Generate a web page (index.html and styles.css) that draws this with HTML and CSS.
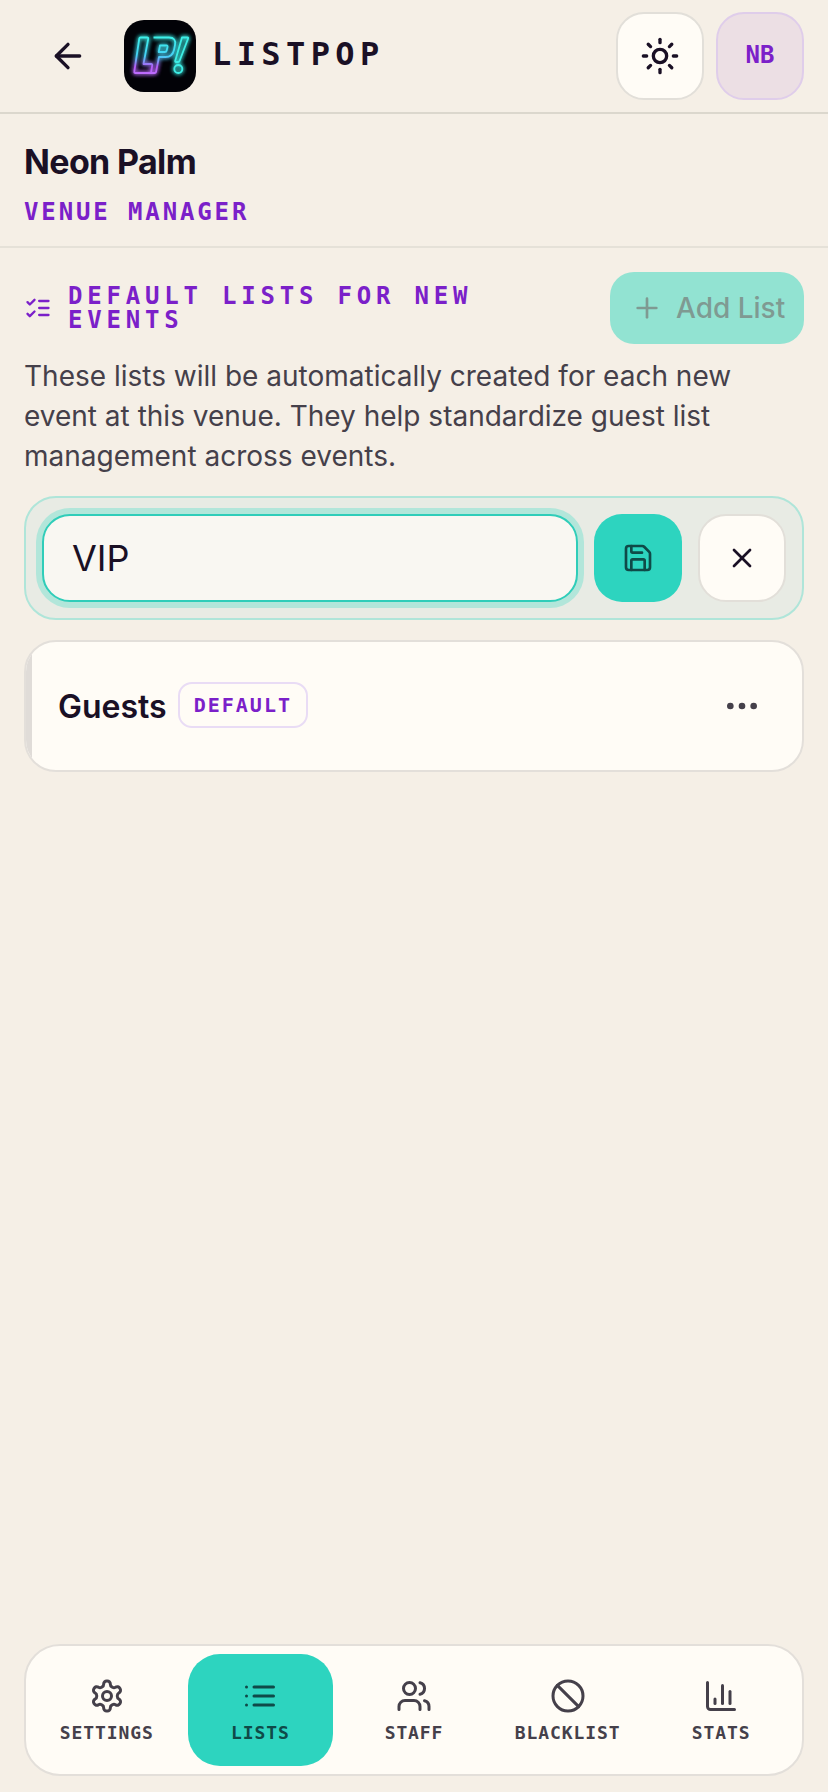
FILE: index.html
```html
<!DOCTYPE html>
<html lang="en">
<head>
    <meta charset="UTF-8">
    <meta name="viewport" content="width=device-width, initial-scale=1.0">
    <title>Default Lists - Neon Palm</title>
    <link rel="stylesheet" href="styles.css">
</head>
<body>

<header class="topbar">
  <button class="back-btn" aria-label="Back">
    <svg class="icon icon-40" viewBox="0 0 24 24"><path d="m12 19-7-7 7-7"/><path d="M19 12H5"/></svg>
  </button>
  <div class="brand">
    <svg class="logo" viewBox="0 0 72 72" role="img" aria-label="ListPop logo">
      <defs>
        <linearGradient id="neon" gradientUnits="userSpaceOnUse" x1="0" y1="17" x2="0" y2="55">
          <stop offset="0" stop-color="#3df2ea"/>
          <stop offset="0.5" stop-color="#45d0f5"/>
          <stop offset="0.78" stop-color="#b45cf8"/>
          <stop offset="1" stop-color="#c070ff"/>
        </linearGradient>
        <filter id="glow" x="-30%" y="-30%" width="160%" height="160%">
          <feGaussianBlur stdDeviation="2.200" result="blur"/>
          <feMerge>
            <feMergeNode in="blur"/>
            <feMergeNode in="blur"/>
            <feMergeNode in="SourceGraphic"/>
          </feMerge>
        </filter>
      </defs>
      <rect width="72" height="72" rx="20" fill="#020207"/>
      <g class="neon" filter="url(#glow)">
        <path d="M16.500 17.500h6.500q1.500 0 1.200 1.500l-4.700 25h7.500q1.500 0 1.200 1.500l-1 6q-.3 1.500-1.800 1.500H11.500q-1.500 0-1.200-1.500l5-33q.2-1 1.200-1z"/>
        <path d="M29.500 17.500h15.500c5 0 7 3 6 7.500l-1 5c-1 4.500-4 7-8.500 7h-6.500l-3 15q-.2 1-1.500 1h-5"/>
        <path d="M36 25.500h6.500q1.300 0 1 1.500l-.8 3.500q-.3 1.500-2 1.500h-6z"/>
        <path d="M58 17.500h5.500q1 0 .6 1l-8.600 22.500q-.4 1-1.500 1h-2q-1 0-.8-1z" stroke="#3deee6"/>
        <circle cx="54.300" cy="49" r="4" stroke="#3deee6"/>
      </g>
    </svg>
    <span class="brand-name">LISTPOP</span>
  </div>
  <div class="topbar-actions">
    <button class="square-btn" aria-label="Toggle theme">
      <svg class="icon icon-40" viewBox="0 0 24 24">
        <circle cx="12" cy="12" r="4"/>
        <path d="M12 2v2"/><path d="M12 20v2"/><path d="m4.930 4.930 1.410 1.410"/><path d="m17.660 17.660 1.410 1.410"/>
        <path d="M2 12h2"/><path d="M20 12h2"/><path d="m6.340 17.660-1.410 1.410"/><path d="m19.070 4.930-1.410 1.410"/>
      </svg>
    </button>
    <button class="square-btn avatar">NB</button>
  </div>
</header>

<section class="venue">
  <h1>Neon Palm</h1>
  <div class="venue-role">VENUE MANAGER</div>
</section>

<main class="content">
  <div class="section-head">
    <svg class="icon section-icon" viewBox="0 0 24 24">
      <path d="m3 17 2 2 4-4"/><path d="m3 7 2 2 4-4"/><path d="M13 6h8"/><path d="M13 12h8"/><path d="M13 18h8"/>
    </svg>
    <h2>DEFAULT LISTS FOR NEW EVENTS</h2>
    <button class="add-btn">
      <svg class="icon icon-32" viewBox="0 0 24 24"><path d="M5 12h14"/><path d="M12 5v14"/></svg>
      Add List
    </button>
  </div>
  <p class="section-text">These lists will be automatically created for each new event at this venue. They help standardize guest list management across events.</p>

  <div class="edit-row">
    <input class="edit-input" type="text" value="VIP">
    <button class="square-btn save-btn" aria-label="Save">
      <svg class="icon icon-32" viewBox="0 0 24 24">
        <path d="M15.200 3a2 2 0 0 1 1.400.6l3.800 3.800a2 2 0 0 1 .6 1.400V19a2 2 0 0 1-2 2H5a2 2 0 0 1-2-2V5a2 2 0 0 1 2-2z"/>
        <path d="M17 21v-7a1 1 0 0 0-1-1H8a1 1 0 0 0-1 1v7"/>
        <path d="M7 3v4a1 1 0 0 0 1 1h7"/>
      </svg>
    </button>
    <button class="square-btn" aria-label="Cancel">
      <svg class="icon icon-32" viewBox="0 0 24 24"><path d="M18 6 6 18"/><path d="m6 6 12 12"/></svg>
    </button>
  </div>

  <div class="list-card">
    <span class="list-name">Guests</span>
    <span class="badge">DEFAULT</span>
    <button class="menu-btn" aria-label="More">
      <svg class="icon icon-40" viewBox="0 0 24 24">
        <circle cx="12" cy="12" r="1"/><circle cx="19" cy="12" r="1"/><circle cx="5" cy="12" r="1"/>
      </svg>
    </button>
  </div>
</main>

<footer class="bottom">
  <nav class="tabs">
    <a class="tab">
      <svg class="icon icon-36" viewBox="0 0 24 24">
        <path d="M12.220 2h-.44a2 2 0 0 0-2 2v.18a2 2 0 0 1-1 1.730l-.43.25a2 2 0 0 1-2 0l-.15-.08a2 2 0 0 0-2.730.73l-.22.38a2 2 0 0 0 .73 2.730l.15.1a2 2 0 0 1 1 1.720v.51a2 2 0 0 1-1 1.740l-.15.09a2 2 0 0 0-.73 2.730l.22.38a2 2 0 0 0 2.730.73l.15-.08a2 2 0 0 1 2 0l.43.25a2 2 0 0 1 1 1.730V20a2 2 0 0 0 2 2h.44a2 2 0 0 0 2-2v-.18a2 2 0 0 1 1-1.730l.43-.25a2 2 0 0 1 2 0l.15.08a2 2 0 0 0 2.730-.73l.22-.39a2 2 0 0 0-.73-2.730l-.15-.08a2 2 0 0 1-1-1.740v-.5a2 2 0 0 1 1-1.740l.15-.09a2 2 0 0 0 .73-2.730l-.22-.38a2 2 0 0 0-2.730-.73l-.15.08a2 2 0 0 1-2 0l-.43-.25a2 2 0 0 1-1-1.730V4a2 2 0 0 0-2-2z"/>
        <circle cx="12" cy="12" r="3"/>
      </svg>
      SETTINGS
    </a>
    <a class="tab active">
      <svg class="icon icon-36" viewBox="0 0 24 24">
        <path d="M3 12h.01"/><path d="M3 18h.01"/><path d="M3 6h.01"/><path d="M8 12h13"/><path d="M8 18h13"/><path d="M8 6h13"/>
      </svg>
      LISTS
    </a>
    <a class="tab">
      <svg class="icon icon-36" viewBox="0 0 24 24">
        <path d="M16 21v-2a4 4 0 0 0-4-4H6a4 4 0 0 0-4 4v2"/><circle cx="9" cy="7" r="4"/>
        <path d="M22 21v-2a4 4 0 0 0-3-3.870"/><path d="M16 3.130a4 4 0 0 1 0 7.750"/>
      </svg>
      STAFF
    </a>
    <a class="tab">
      <svg class="icon icon-36" viewBox="0 0 24 24"><circle cx="12" cy="12" r="10"/><path d="m4.900 4.900 14.200 14.200"/></svg>
      BLACKLIST
    </a>
    <a class="tab">
      <svg class="icon icon-36" viewBox="0 0 24 24">
        <path d="M3 3v16a2 2 0 0 0 2 2h16"/><path d="M18 17V9"/><path d="M13 17V5"/><path d="M8 17v-3"/>
      </svg>
      STATS
    </a>
  </nav>
</footer>

</body>
</html>
```

FILE: styles.css
```css
* {box-sizing: border-box;}

body {
  margin: 0;
  min-height: 100vh;
  display: flex;
  flex-direction: column;
  background-color: #f5efe6;
  color: #1a1025;
  font-family: Inter, "Noto Sans", sans-serif;
}

button {
  font: inherit;
  color: inherit;
  background: none;
  border: 0;
  padding: 0;
}

.icon {
  display: block;
  flex: none;
  fill: none;
  stroke: currentColor;
  stroke-width: 2;
  stroke-linecap: round;
  stroke-linejoin: round;
}

.icon-32 {width: 32px; height: 32px;}
.icon-36 {width: 36px; height: 36px;}
.icon-40 {width: 40px; height: 40px;}

.topbar {
  display: flex;
  align-items: center;
  padding: 12px 24px;
  border-bottom: 2px solid #dbd7cd;
}

.back-btn {
  width: 88px;
  height: 88px;
  display: flex;
  align-items: center;
  justify-content: center;
  margin-right: 12px;
}

.brand {
  display: flex;
  align-items: center;
  gap: 16px;
  flex: 1;
}

.logo {
  display: block;
  width: 72px;
  height: 72px;
}

.neon path,
.neon circle {
  fill: none;
  stroke-width: 1.800;
  stroke-linejoin: round;
}

.neon path:not([stroke]) {
  stroke: url(#neon);
}

.brand-name {
  padding-bottom: 4px;
  font-family: "DejaVu Sans Mono", "Liberation Mono", monospace;
  font-weight: 700;
  font-size: 32px;
  letter-spacing: 5.400px;
}

.topbar-actions {
  display: flex;
  gap: 12px;
}

.square-btn {
  width: 88px;
  height: 88px;
  flex: none;
  display: flex;
  align-items: center;
  justify-content: center;
  background-color: #fffcf6;
  border: 2px solid #e2dfd9;
  border-radius: 28px;
}

.avatar {
  padding-bottom: 2px;
  background-color: #ecdfe4;
  border-color: #dfcdea;
  color: #7b20c9;
  font-family: "DejaVu Sans Mono", "Liberation Mono", monospace;
  font-weight: 700;
  font-size: 24px;
}

.venue {
  padding: 24px 24px 19px;
  border-bottom: 2px solid #e5e1d8;
}

.venue h1 {
  margin: 0;
  font-size: 34px;
  line-height: 48px;
  font-weight: 700;
  letter-spacing: -0.640px;
}

.venue-role {
  margin-top: 11px;
  color: #7b20c9;
  font-family: "DejaVu Sans Mono", "Liberation Mono", monospace;
  font-weight: 700;
  font-size: 24px;
  line-height: 30px;
  letter-spacing: 2.880px;
}

.content {
  flex: 1;
  padding: 24px 24px 0;
}

.section-head {
  display: flex;
  align-items: center;
}

.section-icon {
  width: 28px;
  height: 28px;
  margin-right: 16px;
  color: #7b20c9;
}

.section-head h2 {
  flex: 1;
  margin: 0 24px 0 0;
  color: #7b20c9;
  font-family: "DejaVu Sans Mono", "Liberation Mono", monospace;
  font-weight: 700;
  font-size: 24px;
  line-height: 24px;
  letter-spacing: 4.800px;
}

.add-btn {
  display: flex;
  align-items: center;
  gap: 13px;
  flex: none;
  height: 72px;
  width: 194px;
  padding-left: 21px;
  background-color: #92e3d2;
  border-radius: 24px;
  color: #7f9a92;
  font-size: 28px;
  font-weight: 500;
}

.section-text {
  margin: 12px 0 20px;
  color: #45404a;
  font-size: 28px;
  line-height: 40px;
}

.edit-row {
  display: flex;
  gap: 16px;
  padding: 16px;
  background-color: #e8ebe4;
  border: 2px solid #afe5d9;
  border-radius: 32px;
}

.edit-input {
  flex: 1;
  min-width: 0;
  height: 88px;
  padding: 0 28px;
  background-color: #f9f7f2;
  border: 2px solid #2fcdb9;
  border-radius: 28px;
  box-shadow: 0 0 0 6px #b2e6da;
  color: #1a1025;
  font-family: inherit;
  font-size: 36px;
  outline: none;
}

.save-btn {
  background-color: #2dd4bf;
  border: 0;
  color: #0f4a48;
}

.list-card {
  position: relative;
  overflow: hidden;
  display: flex;
  align-items: center;
  gap: 11px;
  min-height: 132px;
  margin-top: 20px;
  padding: 0 40px 0 32px;
  background-color: #fffcf6;
  border: 2px solid #e3dfda;
  border-radius: 32px;
}

/* grey stripe for a list with no colour of its own */
.list-card::before {
  content: "";
  position: absolute;
  left: 0;
  top: 0;
  bottom: 0;
  width: 6px;
  background-color: #e0dcd8;
}

.list-name {
  font-size: 32px;
  font-weight: 600;
}

.badge {
  margin-bottom: 2px;
  padding: 0 14px;
  height: 46px;
  display: flex;
  align-items: center;
  border: 2px solid #e9dcf5;
  border-radius: 14px;
  color: #7b20c9;
  font-family: "DejaVu Sans Mono", "Liberation Mono", monospace;
  font-weight: 700;
  font-size: 20px;
  letter-spacing: 2px;
}

.menu-btn {
  margin-left: auto;
  color: #45404a;
}

.menu-btn circle {
  fill: currentColor;
}

.bottom {
  padding: 0 24px 16px;
}

.tabs {
  display: flex;
  gap: 8px;
  padding: 8px;
  background-color: #fffcf6;
  border: 2px solid #e3dfda;
  border-radius: 36px;
}

.tab {
  flex: 1 1 0;
  min-width: 0;
  height: 112px;
  padding-top: 24px;
  display: flex;
  flex-direction: column;
  align-items: center;
  gap: 7px;
  border-radius: 32px;
  color: #45404a;
  font-family: "DejaVu Sans Mono", "Liberation Mono", monospace;
  font-weight: 700;
  font-size: 18px;
  line-height: 24px;
  letter-spacing: 0.900px;
}

.tab.active {
  background-color: #2dd4bf;
  color: #0f4a48;
}
```
